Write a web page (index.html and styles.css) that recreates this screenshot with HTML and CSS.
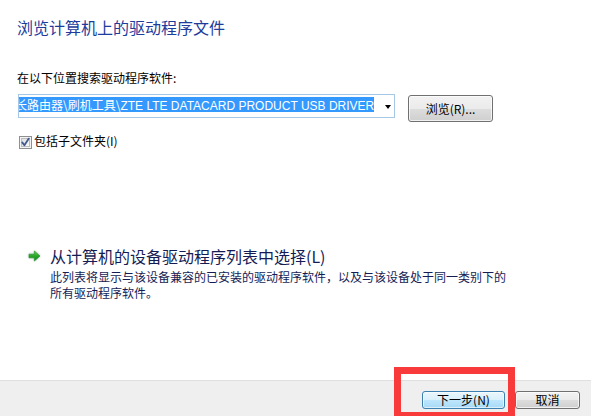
FILE: index.html
```html
<!DOCTYPE html>
<html lang="zh-CN">
<head>
<meta charset="utf-8">
<title>浏览计算机上的驱动程序文件</title>
<link rel="stylesheet" href="styles.css">
</head>
<body>
<div class="dialog">
  <div class="content">
    <h1 class="title">浏览计算机上的驱动程序文件</h1>
    <div class="label">在以下位置搜索驱动程序软件:</div>
    <div class="path-row">
      <div class="combo">
        <div class="combo-text"><span class="sel"><span class="cut">长路由器\刷机工具\<span class="latin">ZTE LTE DATACARD PRODUCT USB DRIVER</span></span></span></div>
        <div class="combo-arrow"></div>
      </div>
      <button class="btn browse">浏览(R)...</button>
    </div>
    <div class="check-row">
      <span class="checkbox">
        <svg width="13" height="13" viewBox="0 0 13 13">
          <defs>
            <linearGradient id="cbg" x1="0" y1="0" x2="1" y2="1">
              <stop offset="0" stop-color="#dcdcdc"/>
              <stop offset="1" stop-color="#fbfbfb"/>
            </linearGradient>
          </defs>
          <rect x="0.5" y="0.5" width="12" height="12" fill="#f4f4f4" stroke="#8e8f8f"/>
          <rect x="2.5" y="2.5" width="8" height="8" fill="url(#cbg)" stroke="#bdbdbd"/>
          <path d="M3.2 6.4 L5.4 9.3 L9.8 2.6" fill="none" stroke="#3f5a8f" stroke-width="1.8" stroke-linecap="round" stroke-linejoin="round"/>
        </svg>
      </span>
      <span class="check-label">包括子文件夹(I)</span>
    </div>
    <div class="cmdlink">
      <svg class="arrow" width="16" height="14" viewBox="0 0 16 14">
        <defs>
          <linearGradient id="ag" x1="0" y1="0" x2="0" y2="1">
            <stop offset="0" stop-color="#6fd35a"/>
            <stop offset="0.5" stop-color="#27a82a"/>
            <stop offset="1" stop-color="#12861b"/>
          </linearGradient>
          <filter id="glow" x="-30%" y="-30%" width="160%" height="160%">
            <feGaussianBlur in="SourceAlpha" stdDeviation="1"/>
            <feComponentTransfer><feFuncA type="linear" slope="0.35"/></feComponentTransfer>
            <feMerge><feMergeNode/><feMergeNode in="SourceGraphic"/></feMerge>
          </filter>
        </defs>
        <path d="M2 5.2 H7.4 V2 L13 7 L7.4 12 V8.8 H2 Z" fill="url(#ag)" filter="url(#glow)" stroke="#1a8a20" stroke-width="0.6" stroke-linejoin="round"/>
      </svg>
      <div class="cmd-body">
        <div class="cmd-title">从计算机的设备驱动程序列表中选择(L)</div>
        <div class="cmd-desc">此列表将显示与该设备兼容的已安装的驱动程序软件，以及与该设备处于同一类别下的<br>所有驱动程序软件。</div>
      </div>
    </div>
  </div>
  <div class="footer">
    <button class="btn next">下一步(N)</button>
    <button class="btn cancel">取消</button>
  </div>
  <div class="annot"></div>
</div>
</body>
</html>
```
FILE: styles.css
```css
html, body {
  margin: 0;
  padding: 0;
  background: #ffffff;
}
body {
  font-family: "Noto Sans CJK SC", "Noto Sans", sans-serif;
  font-size: 12px;
  color: #000;
}
.dialog {
  position: relative;
  width: 591px;
  height: 416px;
  display: flex;
  flex-direction: column;
  overflow: hidden;
}
.content {
  flex: 1;
  padding: 17px 0 0 17px;
}
.title {
  margin: 0;
  font-size: 16px;
  line-height: 20px;
  font-weight: normal;
  color: #1d3c9c;
}
.label {
  margin-top: 33px;
  line-height: 16px;
}
.path-row {
  margin-top: 8px;
  display: flex;
  align-items: flex-start;
  gap: 13px;
  margin-left: 1px;
}
.combo {
  box-sizing: border-box;
  width: 377px;
  height: 24px;
  border: 1px solid #a6c8e8;
  background: #fff;
  display: flex;
  align-items: flex-start;
}
.combo-text {
  flex: 1;
  overflow: hidden;
  white-space: nowrap;
  padding-top: 2px;
  height: 15px;
}
.sel {
  display: inline-block;
  overflow: hidden;
  background: #3399ff;
  color: #fff;
  line-height: 15px;
  height: 15px;
  vertical-align: top;
}
.cut {
  display: inline-block;
  margin-left: -4px;
  white-space: nowrap;
}
.latin {
  font-family: "Liberation Sans", "Noto Sans", sans-serif;
  font-size: 12px;
}
.combo-arrow {
  width: 0;
  height: 0;
  margin: 10px 3px 0 8px;
  border-left: 3.5px solid transparent;
  border-right: 3.5px solid transparent;
  border-top: 4px solid #000;
}
.btn {
  box-sizing: border-box;
  font-family: "Noto Sans CJK SC", "Noto Sans", sans-serif;
  font-size: 12px;
  color: #000;
  border: 1px solid #707070;
  border-radius: 3px;
  background: linear-gradient(to bottom, #f2f2f2 0%, #ebebeb 50%, #dddddd 51%, #cfcfcf 100%);
  box-shadow: inset 0 0 0 1px rgba(255,255,255,0.7);
  padding: 0;
  margin: 0;
  line-height: 14px;
}
.browse {
  width: 85px;
  height: 27px;
  margin-top: 1px;
}
.check-row {
  margin-top: 11px;
  display: flex;
  align-items: flex-start;
  margin-left: 2px;
  line-height: 16px;
}
.checkbox {
  display: block;
  width: 13px;
  height: 13px;
  margin-top: 3px;
  margin-right: 2px;
}
.checkbox svg {
  display: block;
}
.cmdlink {
  margin-top: 97px;
  display: flex;
  align-items: flex-start;
  margin-left: 10px;
}
.arrow {
  display: block;
  margin-top: 3px;
  margin-right: 7px;
}
.cmd-body {
  color: #151c55;
}
.cmd-title {
  font-size: 16px;
  line-height: 20px;
}
.cmd-desc {
  margin-top: 3px;
  line-height: 16px;
}
.footer {
  border-top: 1px solid #dfdfdf;
  background: #efefef;
  display: flex;
  justify-content: flex-end;
  align-items: flex-start;
  gap: 10px;
  padding: 10px 11px 0 0;
  box-sizing: border-box;
  flex: none;
  height: 36px;
}
.next {
  width: 83px;
  height: 18px;
  border-color: #3c7fb1;
  background: linear-gradient(to bottom, #eaf6fd 0%, #d9f0fc 50%, #bee6fd 51%, #a7d9f5 100%);
  box-shadow: inset 0 0 0 1px rgba(255,255,255,0.6);
}
.cancel {
  width: 65px;
  height: 18px;
}
.annot {
  position: absolute;
  left: 394px;
  top: 367px;
  width: 121px;
  height: 52px;
  box-sizing: border-box;
  border: 7px solid #f93a3a;
  pointer-events: none;
}
```
